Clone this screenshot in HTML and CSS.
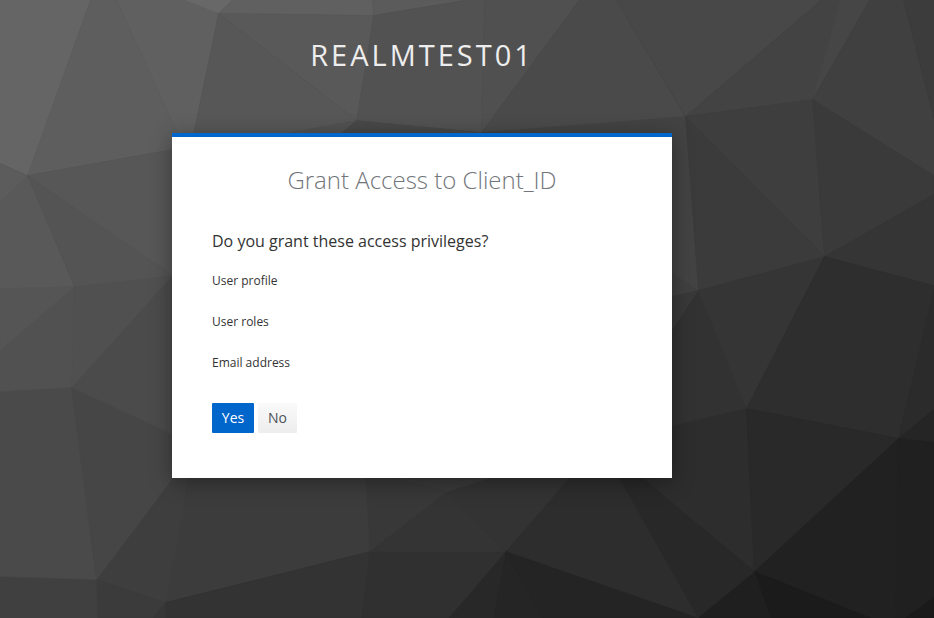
FILE: index.html
```html
<!DOCTYPE html>
<html lang="en">
<head>
<meta charset="utf-8">
<title>Grant Access</title>
<link rel="stylesheet" href="styles.css">
</head>
<body>
<div class="page">
<svg class="backdrop" viewBox="0 0 934 618" aria-hidden="true">
<g id="facets"></g>
</svg>
<main class="login">
<h1 class="realm">realmtest01</h1>
<section class="card">
<h2 class="title">Grant Access to Client_ID</h2>
<h3 class="question">Do you grant these access privileges?</h3>
<ul class="scopes">
<li>User profile</li>
<li>User roles</li>
<li>Email address</li>
</ul>
<div class="actions">
<button class="btn primary" type="button">Yes</button>
<button class="btn" type="button">No</button>
</div>
</section>
</main>
</div>
<script src="facets.js"></script>
</body>
</html>
```
FILE: styles.css
```css
* { box-sizing: border-box; }
body {
  margin: 0;
  background: #393939;
  color: #333;
  font-family: "Open Sans", "Liberation Sans", sans-serif;
  font-size: 12px;
}
.page {
  display: grid;
  width: 934px;
  height: 618px;
  overflow: hidden;
}
.backdrop, .login { grid-area: 1 / 1; }
.backdrop { width: 934px; height: 618px; display: block; }
.login { z-index: 1; width: 500px; margin-left: 172px; }
.realm {
  margin: 0;
  padding-top: 35px;
  height: 133px;
  font-size: 29px;
  line-height: 40px;
  font-weight: 400;
  letter-spacing: 3px;
  text-align: center;
  text-transform: uppercase;
  white-space: nowrap;
  color: #ededed;
}
.card {
  height: 345px;
  padding: 27px 40px 0;
  background: #fff;
  border-top: 4px solid #06c;
  box-shadow: 0 4px 20px rgba(0, 0, 0, .36);
}
.title {
  margin: 0;
  font-size: 24px;
  line-height: 32px;
  font-weight: 300;
  text-align: center;
  color: #72767b;
}
.question {
  margin: 34px 0 0;
  font-size: 16px;
  line-height: 22px;
  font-weight: 400;
}
.scopes {
  display: grid;
  gap: 21px;
  margin: 19px 0 0;
  padding: 0;
  list-style: none;
  line-height: 20px;
}
.actions { display: flex; gap: 4px; margin-top: 30px; }
.btn {
  width: 39px;
  height: 30px;
  padding: 0;
  border: 0;
  border-radius: 1px;
  background: linear-gradient(#fafafa, #ededed);
  color: #4d5258;
  font: 400 14px/30px "Open Sans", sans-serif;
}
.btn.primary {
  width: 42px;
  background: #06c;
  color: #fff;
  font-weight: 500;
}
```
FILE: facets.js
```js
// Each facet is a grey fill followed by its corner points.
const facets = [
  ["#656565", "0,0 90,0 27,175 0,163"],
  ["#5e5e5e", "90,0 116,0 177,133 172,149 27,175"],
  ["#606060", "116,0 184,0 218,13 190,148 172,149 177,133"],
  ["#686868", "184,0 232,0 218,13"],
  ["#606060", "232,0 372,0 373,15 218,13"],
  ["#5b5b5b", "372,0 467,0 373,15"],
  ["#595959", "218,13 373,15 356,120"],
  ["#575757", "218,13 356,120 286,133 190,148"],
  ["#525252", "286,133 356,120 340,134 286,150"],
  ["#525252", "373,15 467,0 484,0 481,132 356,120"],
  ["#505050", "484,0 579,0 481,132"],
  ["#484848", "356,120 481,132 481,160 320,150"],
  ["#4a4a4a", "579,0 616,0 685,117 481,132"],
  ["#484848", "616,0 821,0 685,116"],
  ["#434343", "821,0 840,0 812,99 685,116"],
  ["#464646", "840,0 869,0 812,99"],
  ["#404040", "869,0 903,0 934,118 934,175 812,99"],
  ["#3c3c3c", "903,0 934,0 934,118"],
  ["#434343", "481,132 685,116 698,290 640,303 640,140"],
  ["#3e3e3e", "685,116 812,99 824,256"],
  ["#3b3b3b", "685,116 824,256 698,290"],
  ["#3a3a3a", "812,99 934,175 934,194 824,256"],
  ["#353535", "824,256 934,194 934,285"],
  ["#404040", "698,290 650,258 640,303"],
  ["#393939", "698,290 640,303 640,378"],
  ["#323232", "698,290 746,408 640,433 640,378"],
  ["#353535", "698,290 824,256 746,408"],
  ["#2e2e2e", "824,256 934,285 934,290 898,438 746,408"],
  ["#2b2b2b", "934,290 934,409 898,438"],
  ["#252525", "934,409 934,442 898,438"],
  ["#2d2d2d", "746,408 754,571 630,468 640,433"],
  ["#292929", "746,408 898,438 754,571"],
  ["#212121", "898,438 894,618 870,618 754,571"],
  ["#202020", "898,438 934,442 934,597 905,618 894,618"],
  ["#1a1a1a", "934,597 934,618 905,618"],
  ["#1b1b1b", "754,571 870,618 770,618"],
  ["#1f1f1f", "754,571 770,618 697,618"],
  ["#282828", "754,571 697,618 618,477 630,468"],
  ["#2d2d2d", "618,477 697,618 505,551 575,470"],
  ["#242424", "505,551 697,618 542,618"],
  ["#252525", "505,551 542,618 493,618"],
  ["#282828", "505,551 493,618 448,618"],
  ["#303030", "505,551 448,618 361,618 369,551"],
  ["#343434", "505,551 369,551 447,491"],
  ["#333333", "447,491 500,474 575,470 505,551"],
  ["#3a3a3a", "447,491 380,474 500,474"],
  ["#383838", "447,491 369,551 365,470 380,474"],
  ["#3c3c3c", "365,470 369,551 165,602 190,470"],
  ["#333333", "369,551 361,618 165,618 165,602"],
  ["#3e3e3e", "178,470 190,470 165,602 96,579"],
  ["#3b3b3b", "96,579 165,602 153,618 97,618"],
  ["#373737", "165,602 165,618 153,618"],
  ["#404040", "0,576 96,579 97,618 0,618"],
  ["#4a4a4a", "0,391 71,387 96,579 0,576"],
  ["#464646", "71,387 190,442 178,470 96,579"],
  ["#4b4b4b", "71,387 172,275 190,275 190,442"],
  ["#505050", "74,286 172,275 71,387"],
  ["#515151", "74,286 71,387 0,391 0,350"],
  ["#555555", "0,288 74,286 0,350"],
  ["#595959", "27,175 74,286 0,288 0,202"],
  ["#5c5c5c", "0,163 27,175 0,202"],
  ["#545454", "27,175 172,275 74,286"],
  ["#575757", "27,175 190,146 190,275 172,275"]
];
const centre = (value, limit) => (value <= 0 || value >= limit ? value : value + 0.6);
const layer = document.getElementById("facets");
for (const [fill, corners] of facets) {
  const points = corners.split(" ").map((corner) => {
    const [x, y] = corner.split(",").map(Number);
    return centre(x, 934) + "," + centre(y, 618);
  }).join(" ");
  const facet = document.createElementNS("http://www.w3.org/2000/svg", "polygon");
  facet.setAttribute("points", points);
  facet.setAttribute("fill", fill);
  facet.setAttribute("stroke", fill);
  facet.setAttribute("stroke-width", "0.6");
  layer.appendChild(facet);
}
```
